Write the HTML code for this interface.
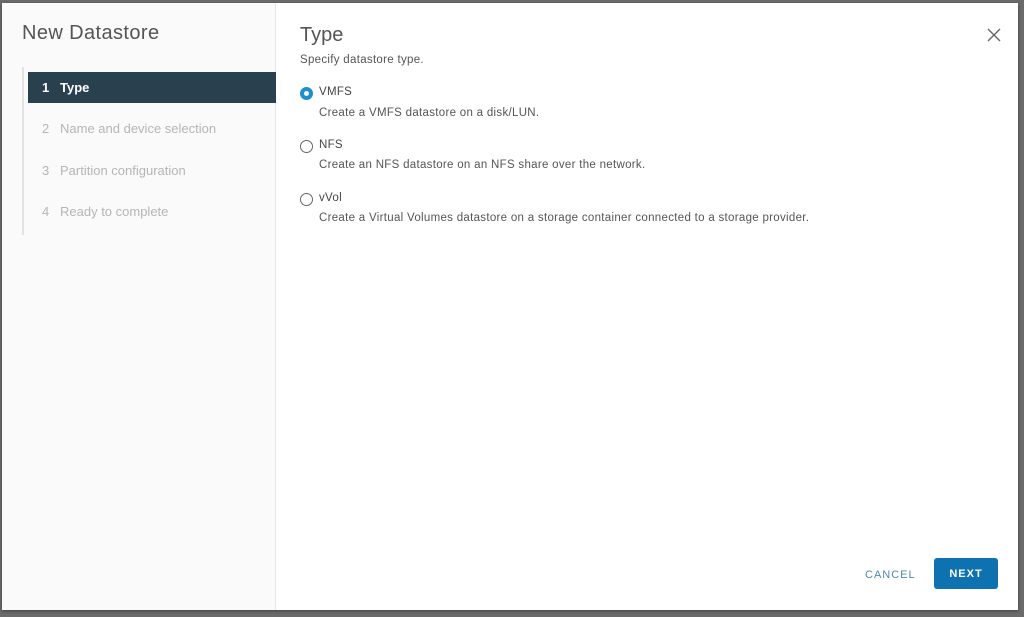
<!DOCTYPE html>
<html><head><meta charset="utf-8"><style>
body{margin:0;width:1024px;height:617px;background:#6a6a6a;position:relative;overflow:hidden;font-family:"Liberation Sans",sans-serif;}
.dlg{position:absolute;left:2px;top:3px;width:1016px;height:607px;background:#fff;box-shadow:0 1px 3px rgba(0,0,0,.4);}
.side{position:absolute;left:0;top:0;width:273px;height:607px;background:#fafafa;border-right:1px solid #e6e6e6;}
.side h1{position:absolute;left:20px;top:19px;margin:0;font-weight:normal;font-size:20px;letter-spacing:0.4px;color:#555;}
.vline{position:absolute;left:20px;top:64px;width:2px;height:168px;background:#e2e2e2;}
.nav{position:absolute;left:26px;width:248px;height:31px;line-height:31px;font-size:13px;color:#b5b5b5;padding-left:14px;box-sizing:border-box;}
.nav.act{background:#29414e;color:#fff;font-weight:bold;}
.nav span{display:inline-block;width:18px;}
.main h2{position:absolute;left:298px;top:21px;margin:0;font-weight:normal;font-size:20px;color:#555;}
.t{position:absolute;font-size:11.5px;letter-spacing:0.3px;color:#555;white-space:nowrap;}
.rad{position:absolute;left:298px;width:13px;height:13px;border:1px solid #666;border-radius:50%;box-sizing:border-box;}
.rad.on{border:4px solid #1d8fcf;background:#fff;}
.x{position:absolute;left:985px;top:25px;}
.cancel{position:absolute;left:863px;top:566px;font-size:11px;letter-spacing:1px;color:#4a8cb0;}
.next{position:absolute;left:932px;top:555px;width:64px;height:31px;background:#0e72b0;border-radius:3px;color:#fff;font-size:11px;font-weight:bold;letter-spacing:1px;text-align:center;line-height:33px;}
</style></head><body>
<div class="dlg">
 <div class="side">
  <h1>New Datastore</h1>
  <div class="vline"></div>
  <div class="nav act" style="top:69px"><span>1</span>Type</div>
  <div class="nav" style="top:110px"><span>2</span>Name and device selection</div>
  <div class="nav" style="top:152px"><span>3</span>Partition configuration</div>
  <div class="nav" style="top:193px"><span>4</span>Ready to complete</div>
 </div>
 <div class="main">
  <h2>Type</h2>
  <div class="t" style="left:298px;top:51px">Specify datastore type.</div>
  <div class="rad on" style="top:84px"></div>
  <div class="t" style="left:317px;top:83px;color:#444">VMFS</div>
  <div class="t" style="left:317px;top:104px">Create a VMFS datastore on a disk/LUN.</div>
  <div class="rad" style="top:137px"></div>
  <div class="t" style="left:317px;top:136px;color:#444">NFS</div>
  <div class="t" style="left:317px;top:156px">Create an NFS datastore on an NFS share over the network.</div>
  <div class="rad" style="top:190px"></div>
  <div class="t" style="left:317px;top:189px;color:#444">vVol</div>
  <div class="t" style="left:317px;top:209px">Create a Virtual Volumes datastore on a storage container connected to a storage provider.</div>
  <svg class="x" width="14" height="14" viewBox="0 0 14 14"><path d="M1 1L13 13M13 1L1 13" stroke="#666" stroke-width="1.4"/></svg>
  <div class="cancel">CANCEL</div>
  <div class="next">NEXT</div>
 </div>
</div>
</body></html>
